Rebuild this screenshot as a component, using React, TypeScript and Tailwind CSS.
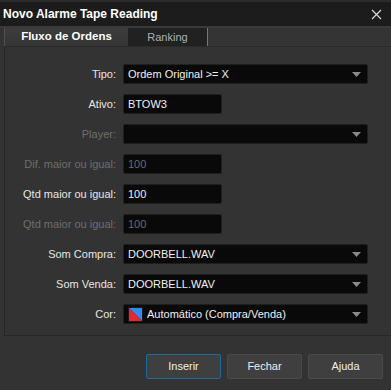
import React from "react";

const font = { fontFamily: '"Liberation Sans", Arial, sans-serif' };

function Arrow() {
  return (
    <svg width="9" height="5" viewBox="0 0 9 5" className="ml-auto mr-[6px]">
      <path d="M0 0 L9 0 L4.5 5 Z" fill="#8a8a8a" />
    </svg>
  );
}

function Row({
  label,
  disabled,
  children,
}: {
  label: string;
  disabled?: boolean;
  children: React.ReactNode;
}) {
  return (
    <div className="flex items-center h-[20px] mb-[10px]">
      <div
        className={`w-[111px] text-right text-[11px] leading-none ${
          disabled ? "text-[#6e6e6e]" : "text-[#e6e6e6]"
        }`}
      >
        {label}
      </div>
      <div className="ml-[7px]">{children}</div>
    </div>
  );
}

function Input({ value, wide, select, disabled, swatch }: { value: string; wide?: boolean; select?: boolean; disabled?: boolean; swatch?: boolean }) {
  return (
    <div
      className={`h-[20px] ${wide ? "w-[245px]" : "w-[99px]"} bg-[#090909] border border-[#1f1f1f] rounded-[2px] flex items-center pl-[4px] text-[11px] leading-none ${
        disabled ? "text-[#6a6a6a]" : "text-[#f0f0f0]"
      }`}
    >
      {swatch && (
        <svg width="15" height="15" viewBox="0 0 15 15" className="mr-[4px]">
          <rect x="0" y="0" width="15" height="15" fill="#1a1a1a" />
          <path d="M1 1 L14 1 L14 14 Z" fill="#2f8bf0" />
          <path d="M1 1 L1 14 L14 14 Z" fill="#e8262c" />
        </svg>
      )}
      <span>{value}</span>
      {select && <Arrow />}
    </div>
  );
}

function Button({ label, focused }: { label: string; focused?: boolean }) {
  return (
    <div
      className={`w-[75px] h-[25px] rounded-[2px] bg-[#3f3f3f] flex items-center justify-center text-[11px] text-[#eeeeee] border ${
        focused ? "border-[#1a6e9c]" : "border-[#4a4a4a]"
      }`}
    >
      {label}
    </div>
  );
}

export default function App() {
  return (
    <div className="w-[391px] h-[390px] bg-[#333333] overflow-hidden flex flex-col" style={font}>
      <div className="h-[2px] bg-[#2b2b2b]" />
      <div className="h-[24px] bg-[#1c1c1c] flex items-center pl-[3px] pr-[9px]">
        <span className="text-[12px] font-bold text-white">Novo Alarme Tape Reading</span>
        <svg width="11" height="11" viewBox="0 0 11 11" className="ml-auto">
          <path d="M1 1 L10 10 M10 1 L1 10" stroke="#d8d8d8" strokeWidth="1.2" />
        </svg>
      </div>
      <div className="h-[2px] bg-[#3a3a3a]" />
      <div className="h-[19px] flex bg-[#343434] ml-[4px] border-b border-[#2a2a2a]">
        <div className="w-[124px] h-full bg-gradient-to-b from-[#3c3c3c] to-[#353535] border-l border-[#505050] flex items-center justify-center text-[11.5px] font-bold text-white">
          Fluxo de Ordens
        </div>
        <div className="w-[80px] h-full bg-[#212121] border-r border-[#777777] flex items-center justify-center text-[11px] text-[#aab0b8]">
          Ranking
        </div>
      </div>
      <div className="h-[289px] ml-[4px] border-l border-b border-[#262626] bg-[#333333] pt-[17px]">
        <Row label="Tipo:">
          <Input value="Ordem Original >= X" wide select />
        </Row>
        <Row label="Ativo:">
          <Input value="BTOW3" />
        </Row>
        <Row label="Player:" disabled>
          <Input value="" wide select />
        </Row>
        <Row label="Dif. maior ou igual:" disabled>
          <Input value="100" disabled />
        </Row>
        <Row label="Qtd maior ou igual:">
          <Input value="100" />
        </Row>
        <Row label="Qtd maior ou igual:" disabled>
          <Input value="100" disabled />
        </Row>
        <Row label="Som Compra:">
          <Input value="DOORBELL.WAV" wide select />
        </Row>
        <Row label="Som Venda:">
          <Input value="DOORBELL.WAV" wide select />
        </Row>
        <Row label="Cor:">
          <Input value="Automático (Compra/Venda)" wide select swatch />
        </Row>
      </div>
      <div className="flex justify-end gap-[6px] pr-[8px] pt-[18px]">
        <Button label="Inserir" focused />
        <Button label="Fechar" />
        <Button label="Ajuda" />
      </div>
    </div>
  );
}
